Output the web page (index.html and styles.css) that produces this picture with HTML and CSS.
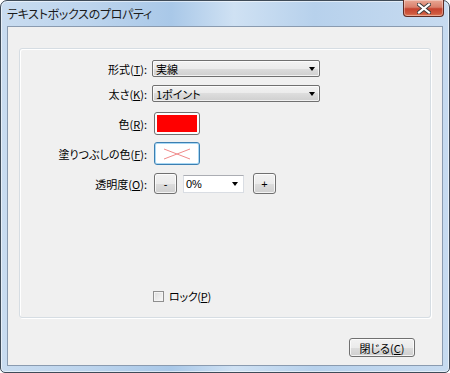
FILE: index.html
```html
<!DOCTYPE html>
<html lang="ja">
<head>
<meta charset="utf-8">
<title>テキストボックスのプロパティ</title>
<link rel="stylesheet" href="styles.css">
</head>
<body>
<div class="window">
  <div class="titlebar">
    <span class="title">テキストボックスのプロパティ</span>
    <div class="close-x">
      <svg width="14" height="11" viewBox="0 0 14 11">
        <path d="M2 1.5 L12 9.5 M12 1.5 L2 9.5" stroke="#3a3a3a" stroke-width="4" stroke-linecap="square"/>
        <path d="M2 1.5 L12 9.5 M12 1.5 L2 9.5" stroke="#ffffff" stroke-width="2.2" stroke-linecap="square"/>
      </svg>
    </div>
  </div>
  <div class="client">
    <div class="group">
      <div class="row row-1">
        <label class="lbl">形式(<u>T</u>):</label>
        <div class="combo w-wide"><span>実線</span><i class="arrow"></i></div>
      </div>
      <div class="row row-2">
        <label class="lbl">太さ(<u>K</u>):</label>
        <div class="combo w-wide"><span>1ポイント</span><i class="arrow"></i></div>
      </div>
      <div class="row row-3">
        <label class="lbl">色(<u>R</u>):</label>
        <div class="swatch"><div class="swatch-red"></div></div>
      </div>
      <div class="row row-4">
        <label class="lbl">塗りつぶしの色(<u>F</u>):</label>
        <div class="swatch swatch-focus">
          <svg width="28" height="12" viewBox="0 0 28 12">
            <path d="M1 1 L27 11 M27 1 L1 11" stroke="#f08a8a" stroke-width="1"/>
          </svg>
        </div>
      </div>
      <div class="row row-5">
        <label class="lbl">透明度(<u>O</u>):</label>
        <div class="btn btn-sq">-</div>
        <div class="edit-combo"><span>0%</span><i class="arrow"></i></div>
        <div class="btn btn-sq">+</div>
      </div>
      <div class="row row-lock">
        <span class="check"></span>
        <span class="check-text">ロック(<u>P</u>)</span>
      </div>
    </div>
    <div class="footer">
      <div class="btn btn-close">閉じる(<u>C</u>)</div>
    </div>
  </div>
</div>
</body>
</html>
```
FILE: styles.css
```css
html, body {
  margin: 0;
  padding: 0;
  width: 450px;
  height: 373px;
  overflow: hidden;
  background: #ffffff;
}
body {
  font-family: "Noto Sans CJK JP", "Noto Sans", sans-serif;
  font-size: 11px;
  color: #000;
  font-feature-settings: "palt";
}
u { text-decoration: underline; text-underline-offset: 1px; }

.window {
  box-sizing: border-box;
  width: 450px;
  height: 373px;
  border: 1px solid #3f4b58;
  border-radius: 7px 7px 5px 5px;
  background: linear-gradient(to right, #c9dcf0 0%, #bcd4ed 20%, #a9c8e8 38%, #cfe1f3 52%, #b7d1ec 70%, #c7dbf0 100%);
  display: flex;
  flex-direction: column;
  box-shadow: inset 0 0 0 1px rgba(255,255,255,0.55);
}
.titlebar {
  height: 25px;
  display: flex;
  align-items: flex-start;
  justify-content: space-between;
  flex: none;
}
.title {
  font-size: 12px;
  margin: 4px 0 0 6px;
  color: #1a1a1a;
  letter-spacing: -0.3px;
}
.close-x {
  width: 41px;
  height: 17px;
  margin: -1px 5px 0 0;
  box-sizing: border-box;
  border: 1px solid #5e2b24;
  border-top: none;
  border-radius: 0 0 4px 4px;
  background: linear-gradient(to bottom, #e9a794 0%, #d9806c 45%, #c6432f 55%, #cf5a3f 85%, #e07f5c 100%);
  box-shadow: inset 0 0 0 1px rgba(255,255,255,0.35);
  display: flex;
  align-items: center;
  justify-content: center;
}

.client {
  flex: 1;
  margin: 0 6px 6px 6px;
  box-sizing: border-box;
  border: 1px solid #8a9bb0;
  background: #f0f0f0;
  display: flex;
  flex-direction: column;
}
.group {
  margin: 21px 11px 0 11px;
  height: 270px;
  box-sizing: border-box;
  border: 1px solid #d6dde3;
  border-radius: 3px;
  box-shadow: inset 1px 1px 0 #ffffff, 1px 1px 0 #ffffff;
  display: flex;
  flex-direction: column;
}
.row {
  display: flex;
  align-items: center;
}
.lbl {
  width: 127px;
  text-align: right;
  margin-right: 5px;
  white-space: nowrap;
}
.row-1 { margin-top: 11px; height: 17px; }
.row-2 { margin-top: 8px; height: 17px; }
.row-3 { margin-top: 10px; height: 23px; }
.row-4 { margin-top: 7px; height: 23px; }
.row-5 { margin-top: 8px; height: 21px; }
.row-lock { margin-top: 96px; padding-left: 133px; height: 12px; }

.combo {
  box-sizing: border-box;
  height: 17px;
  border: 1px solid #707070;
  border-radius: 2px;
  background: linear-gradient(to bottom, #f2f2f2 0%, #ebebeb 50%, #dddddd 50%, #cfcfcf 100%);
  box-shadow: inset 0 0 0 1px rgba(255,255,255,0.7);
  display: flex;
  align-items: center;
  justify-content: space-between;
  padding: 0 4px 0 3px;
}
.w-wide { width: 168px; }
.arrow {
  width: 0;
  height: 0;
  border-left: 3.5px solid transparent;
  border-right: 3.5px solid transparent;
  border-top: 4px solid #000;
  margin-top: 1px;
}

.swatch {
  box-sizing: border-box;
  width: 46px;
  height: 23px;
  border: 1px solid #707070;
  border-radius: 3px;
  background: #fcfcfc;
  padding: 2px;
  display: flex;
  align-items: center;
  justify-content: center;
  margin-left: 2px;
}
.swatch-red {
  width: 100%;
  height: 100%;
  background: #ff0000;
}
.swatch-focus {
  border-color: #3c7fb1;
  box-shadow: inset 0 0 0 1px #a8d8f5;
  background: #ffffff;
}

.btn {
  box-sizing: border-box;
  border: 1px solid #707070;
  border-radius: 3px;
  background: linear-gradient(to bottom, #f2f2f2 0%, #ebebeb 50%, #dddddd 50%, #cfcfcf 100%);
  box-shadow: inset 0 0 0 1px rgba(255,255,255,0.75);
  display: flex;
  align-items: center;
  justify-content: center;
}
.btn-sq {
  width: 23px;
  height: 21px;
  font-family: "Liberation Sans", sans-serif;
  font-size: 11px;
  margin-left: 2px;
}
.edit-combo {
  box-sizing: border-box;
  width: 61px;
  height: 18px;
  margin: 0 7px 0 6px;
  border: 1px solid #d9dde3;
  border-top-color: #abadb3;
  background: #ffffff;
  display: flex;
  align-items: center;
  justify-content: space-between;
  padding: 0 5px 0 2px;
  font-family: "Liberation Sans", sans-serif;
  font-size: 11px;
}

.check {
  box-sizing: border-box;
  width: 11px;
  height: 11px;
  border: 1px solid #8f8f8f;
  background: linear-gradient(135deg, #dcdcdc, #f8f8f8);
  box-shadow: inset 0 0 0 1px #f4f4f4;
  margin-right: 5px;
}
.check-text { letter-spacing: -0.3px; }

.footer {
  display: flex;
  justify-content: flex-end;
  margin: 20px 27px 0 0;
}
.btn-close {
  width: 66px;
  height: 19px;
}
```
